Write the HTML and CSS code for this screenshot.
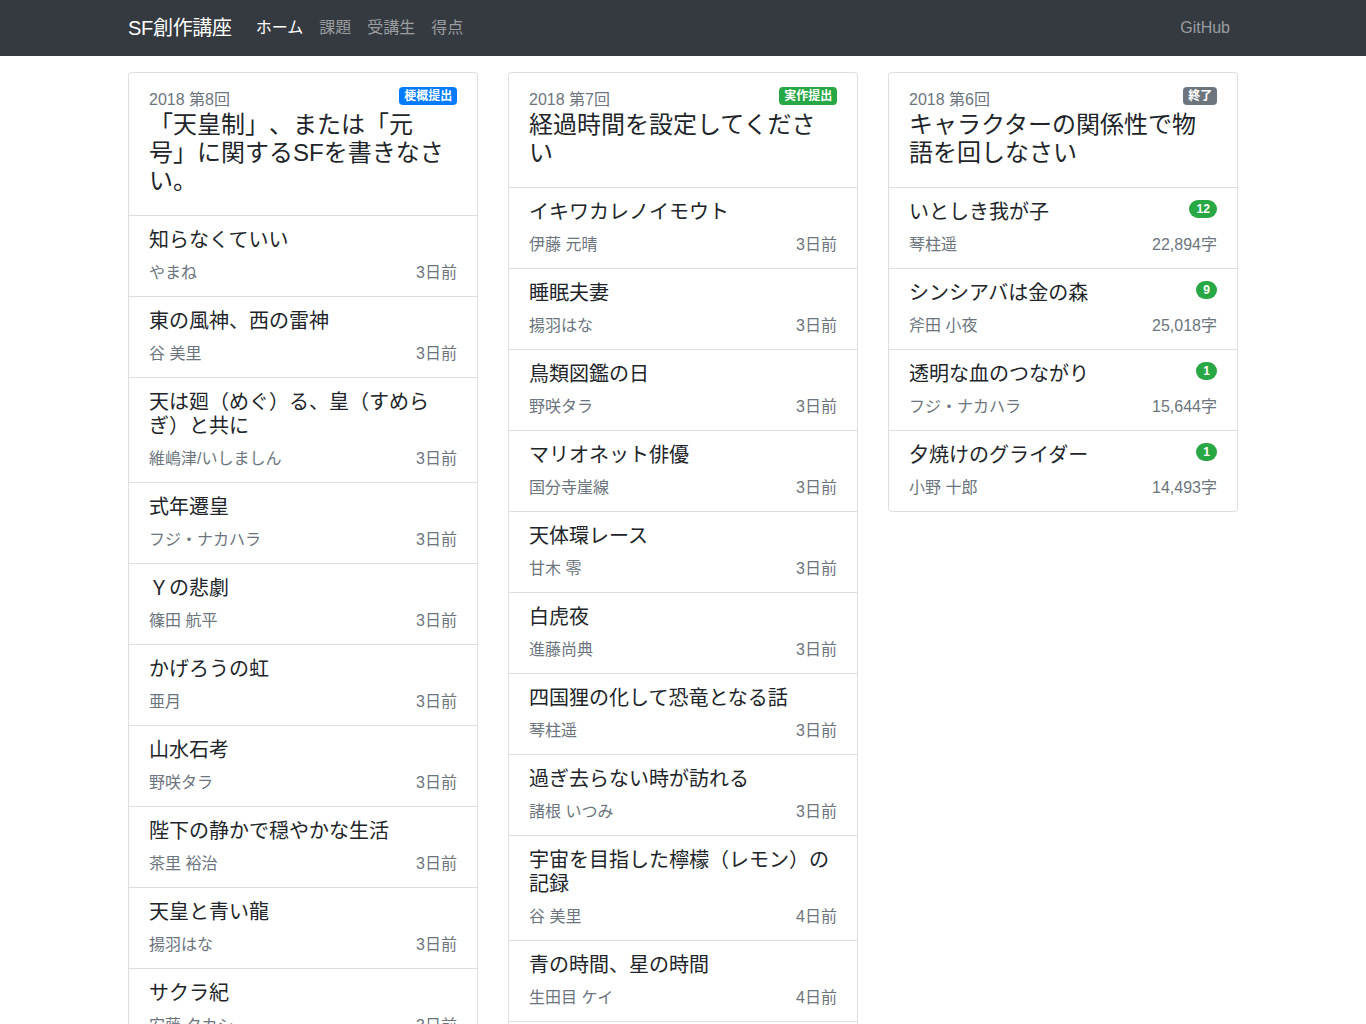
FILE: index.html
```html
<!DOCTYPE html>
<html lang="ja">
<head>
<meta charset="utf-8">
<title>SF創作講座</title>
<link rel="stylesheet" href="styles.css">
</head>
<body>
<nav class="navbar">
  <div class="container nav-inner">
    <a class="brand" href="#">SF創作講座</a>
    <ul class="nav">
      <li><a class="nav-link active" href="#">ホーム</a></li>
      <li><a class="nav-link" href="#">課題</a></li>
      <li><a class="nav-link" href="#">受講生</a></li>
      <li><a class="nav-link" href="#">得点</a></li>
    </ul>
    <a class="nav-link github" href="#">GitHub</a>
  </div>
</nav>

<main class="container main">
  <div class="cols">
    <!-- Column 1 -->
    <section class="card">
      <header class="card-head">
        <div class="subtitle">2018 第8回<span class="badge badge-blue">梗概提出</span></div>
        <h4 class="card-title">「天皇制」、または「元号」に関するSFを書きなさい。</h4>
      </header>
      <ul class="list">
        <li class="item"><h5 class="item-title">知らなくていい</h5><div class="meta"><span>やまね</span><span>3日前</span></div></li>
        <li class="item"><h5 class="item-title">東の風神、西の雷神</h5><div class="meta"><span>谷 美里</span><span>3日前</span></div></li>
        <li class="item"><h5 class="item-title">天は廻（めぐ）る、皇（すめらぎ）と共に</h5><div class="meta"><span>維嶋津/いしましん</span><span>3日前</span></div></li>
        <li class="item"><h5 class="item-title">式年遷皇</h5><div class="meta"><span>フジ・ナカハラ</span><span>3日前</span></div></li>
        <li class="item"><h5 class="item-title">Ｙの悲劇</h5><div class="meta"><span>篠田 航平</span><span>3日前</span></div></li>
        <li class="item"><h5 class="item-title">かげろうの虹</h5><div class="meta"><span>亜月</span><span>3日前</span></div></li>
        <li class="item"><h5 class="item-title">山水石考</h5><div class="meta"><span>野咲タラ</span><span>3日前</span></div></li>
        <li class="item"><h5 class="item-title">陛下の静かで穏やかな生活</h5><div class="meta"><span>茶里 裕治</span><span>3日前</span></div></li>
        <li class="item"><h5 class="item-title">天皇と青い龍</h5><div class="meta"><span>揚羽はな</span><span>3日前</span></div></li>
        <li class="item"><h5 class="item-title">サクラ紀</h5><div class="meta"><span>安藤 タカシ</span><span>3日前</span></div></li>
      </ul>
    </section>

    <!-- Column 2 -->
    <section class="card">
      <header class="card-head">
        <div class="subtitle">2018 第7回<span class="badge badge-green">実作提出</span></div>
        <h4 class="card-title">経過時間を設定してください</h4>
      </header>
      <ul class="list">
        <li class="item"><h5 class="item-title">イキワカレノイモウト</h5><div class="meta"><span>伊藤 元晴</span><span>3日前</span></div></li>
        <li class="item"><h5 class="item-title">睡眠夫妻</h5><div class="meta"><span>揚羽はな</span><span>3日前</span></div></li>
        <li class="item"><h5 class="item-title">鳥類図鑑の日</h5><div class="meta"><span>野咲タラ</span><span>3日前</span></div></li>
        <li class="item"><h5 class="item-title">マリオネット俳優</h5><div class="meta"><span>国分寺崖線</span><span>3日前</span></div></li>
        <li class="item"><h5 class="item-title">天体環レース</h5><div class="meta"><span>甘木 零</span><span>3日前</span></div></li>
        <li class="item"><h5 class="item-title">白虎夜</h5><div class="meta"><span>進藤尚典</span><span>3日前</span></div></li>
        <li class="item"><h5 class="item-title">四国狸の化して恐竜となる話</h5><div class="meta"><span>琴柱遥</span><span>3日前</span></div></li>
        <li class="item"><h5 class="item-title">過ぎ去らない時が訪れる</h5><div class="meta"><span>諸根 いつみ</span><span>3日前</span></div></li>
        <li class="item"><h5 class="item-title">宇宙を目指した檸檬（レモン）の記録</h5><div class="meta"><span>谷 美里</span><span>4日前</span></div></li>
        <li class="item"><h5 class="item-title">青の時間、星の時間</h5><div class="meta"><span>生田目 ケイ</span><span>4日前</span></div></li>
        <li class="item"><h5 class="item-title">&nbsp;</h5><div class="meta"><span>&nbsp;</span><span>&nbsp;</span></div></li>
      </ul>
    </section>

    <!-- Column 3 -->
    <section class="card">
      <header class="card-head">
        <div class="subtitle">2018 第6回<span class="badge badge-gray">終了</span></div>
        <h4 class="card-title">キャラクターの関係性で物語を回しなさい</h4>
      </header>
      <ul class="list">
        <li class="item"><div class="title-row"><h5 class="item-title">いとしき我が子</h5><span class="pill">12</span></div><div class="meta"><span>琴柱遥</span><span>22,894字</span></div></li>
        <li class="item"><div class="title-row"><h5 class="item-title">シンシアバは金の森</h5><span class="pill">9</span></div><div class="meta"><span>斧田 小夜</span><span>25,018字</span></div></li>
        <li class="item"><div class="title-row"><h5 class="item-title">透明な血のつながり</h5><span class="pill">1</span></div><div class="meta"><span>フジ・ナカハラ</span><span>15,644字</span></div></li>
        <li class="item"><div class="title-row"><h5 class="item-title">夕焼けのグライダー</h5><span class="pill">1</span></div><div class="meta"><span>小野 十郎</span><span>14,493字</span></div></li>
      </ul>
    </section>
  </div>
</main>
</body>
</html>
```

FILE: styles.css
```css
* { box-sizing: border-box; }

body {
  margin: 0;
  font-family: "Liberation Sans", "Noto Sans CJK JP", sans-serif;
  font-size: 16px;
  line-height: 1.5;
  color: #212529;
  background: #fff;
  text-spacing-trim: space-all;
  font-feature-settings: "chws" 0, "halt" 0;
}

a { text-decoration: none; }

.container {
  max-width: 1140px;
  margin: 0 auto;
  padding: 0 15px;
}

.navbar {
  background: #343a40;
  padding: 8px 16px;
}

.nav-inner {
  display: flex;
  align-items: center;
  padding: 0;
  max-width: 1110px;
}

.brand {
  color: #fff;
  font-size: 20px;
  line-height: 30px;
  padding: 5px 0;
  margin-right: 16px;
  letter-spacing: -0.3px;
}

.nav {
  display: flex;
  list-style: none;
  margin: 0;
  padding: 0;
}

.nav-link {
  display: block;
  padding: 8px;
  color: rgba(255, 255, 255, 0.5);
  line-height: 24px;
}

.nav-link.active { color: #fff; }

.github { margin-left: auto; }

.main { margin-top: 16px; }

.cols {
  display: grid;
  grid-template-columns: repeat(3, 1fr);
  gap: 30px;
  align-items: start;
}

.card {
  border: 1px solid rgba(0, 0, 0, 0.125);
  border-radius: 4px;
  background: #fff;
  overflow: hidden;
}

.card-head {
  padding: 20px;
}

.subtitle {
  margin-top: -6px;
  padding-top: 1px;
  margin-bottom: -1px;
  color: #6c757d;
  line-height: 24px;
}

.badge {
  float: right;
  display: inline-block;
  font-size: 12px;
  font-weight: 700;
  line-height: 1;
  padding: 3px 4.8px;
  border-radius: 4px;
  color: #fff;
  margin-top: -1px;
}

.badge-blue { background: #007bff; }
.badge-green { background: #28a745; }
.badge-gray { background: #6c757d; }

.card-title {
  margin: 0;
  font-size: 24px;
  font-weight: 400;
  line-height: 28px;
}

.list {
  list-style: none;
  margin: 0;
  padding: 0;
}

.item {
  border-top: 1px solid rgba(0, 0, 0, 0.125);
  padding: 12px 20px;
}

.item-title {
  margin: 0 0 8px;
  font-size: 20px;
  font-weight: 400;
  line-height: 24px;
}

.title-row {
  display: flex;
  justify-content: space-between;
  align-items: flex-start;
}

.title-row .item-title { flex: 1; }

.pill {
  display: inline-block;
  font-size: 12px;
  font-weight: 700;
  line-height: 1;
  padding: 3px 7.2px;
  border-radius: 10rem;
  background: #28a745;
  color: #fff;
  margin-top: 0;
}

.meta {
  display: flex;
  justify-content: space-between;
  color: #6c757d;
  line-height: 24px;
  padding-top: 1px;
  margin-bottom: -1px;
}
```
